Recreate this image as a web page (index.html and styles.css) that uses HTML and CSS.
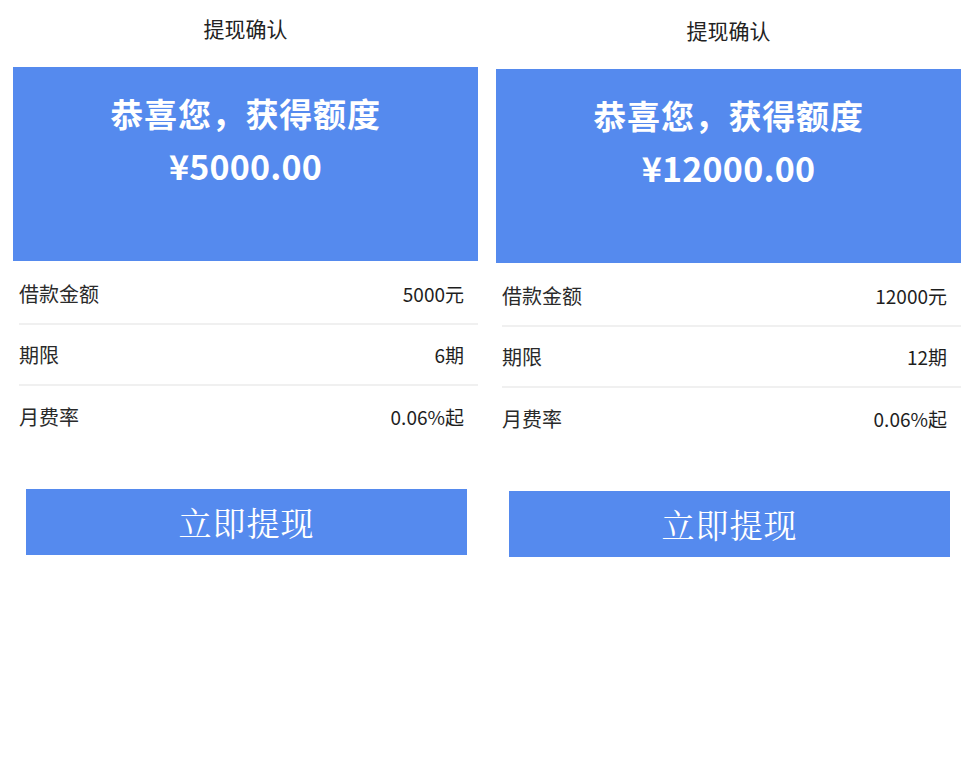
FILE: index.html
```html
<!DOCTYPE html>
<html lang="zh-CN">
<head>
<meta charset="utf-8">
<title>提现确认</title>
<link rel="stylesheet" href="styles.css">
</head>
<body>
<div class="screens">
  <section class="panel">
    <header class="title">提现确认</header>
    <div class="hero">
      <div class="hero-head">恭喜您，获得额度</div>
      <div class="hero-amount">¥5000.00</div>
    </div>
    <div class="rows">
      <div class="row first"><span class="label">借款金额</span><span class="value">5000元</span></div>
      <div class="row"><span class="label">期限</span><span class="value">6期</span></div>
      <div class="row last"><span class="label">月费率</span><span class="value">0.06%起</span></div>
    </div>
    <div class="btn">立即提现</div>
  </section>
  <section class="panel panel-right">
    <header class="title">提现确认</header>
    <div class="hero">
      <div class="hero-head">恭喜您，获得额度</div>
      <div class="hero-amount">¥12000.00</div>
    </div>
    <div class="rows">
      <div class="row first"><span class="label">借款金额</span><span class="value">12000元</span></div>
      <div class="row"><span class="label">期限</span><span class="value">12期</span></div>
      <div class="row last"><span class="label">月费率</span><span class="value">0.06%起</span></div>
    </div>
    <div class="btn">立即提现</div>
  </section>
</div>
</body>
</html>
```

FILE: styles.css
```css
html, body {
  margin: 0;
  padding: 0;
  background: #ffffff;
}
body {
  width: 966px;
  height: 768px;
  overflow: hidden;
  font-family: "Noto Sans CJK SC", "Noto Sans", sans-serif;
  color: #222;
}
.screens {
  display: flex;
  gap: 18px;
  padding-left: 13px;
}
.panel {
  width: 465px;
  display: flex;
  flex-direction: column;
}
.panel-right {
  margin-top: 2px;
}
.title {
  height: 67px;
  box-sizing: border-box;
  padding-top: 14px;
  line-height: 28px;
  font-size: 21px;
  text-align: center;
  color: #222;
}
.hero {
  height: 194px;
  box-sizing: border-box;
  background: #558aee;
  padding-top: 25px;
  text-align: center;
  color: #ffffff;
  font-weight: bold;
}
.hero-head {
  font-size: 33px;
  line-height: 42px;
  letter-spacing: 0.8px;
}
.hero-amount {
  margin-top: 9px;
  font-size: 34px;
  line-height: 46px;
  font-family: "Noto Sans CJK SC", "Liberation Sans", sans-serif;
  letter-spacing: 0.2px;
}
.rows {
  display: flex;
  flex-direction: column;
  padding-top: 3px;
}
.row {
  height: 61px;
  box-sizing: border-box;
  margin-left: 6px;
  padding-right: 14px;
  display: flex;
  align-items: center;
  justify-content: space-between;
  border-bottom: 2px solid #f0f0f0;
}
.row.last {
  border-bottom: none;
}
.label {
  font-size: 20px;
  color: #2a2a2a;
}
.value {
  font-size: 19px;
  color: #1e1e1e;
}
.btn {
  margin: 42px 0 0 13px;
  width: 441px;
  height: 66px;
  background: #558aee;
  color: #ffffff;
  font-size: 33px;
  line-height: 66px;
  text-align: center;
  font-family: "Noto Serif CJK SC", "Noto Sans CJK SC", serif;
  letter-spacing: 1px;
}
```
